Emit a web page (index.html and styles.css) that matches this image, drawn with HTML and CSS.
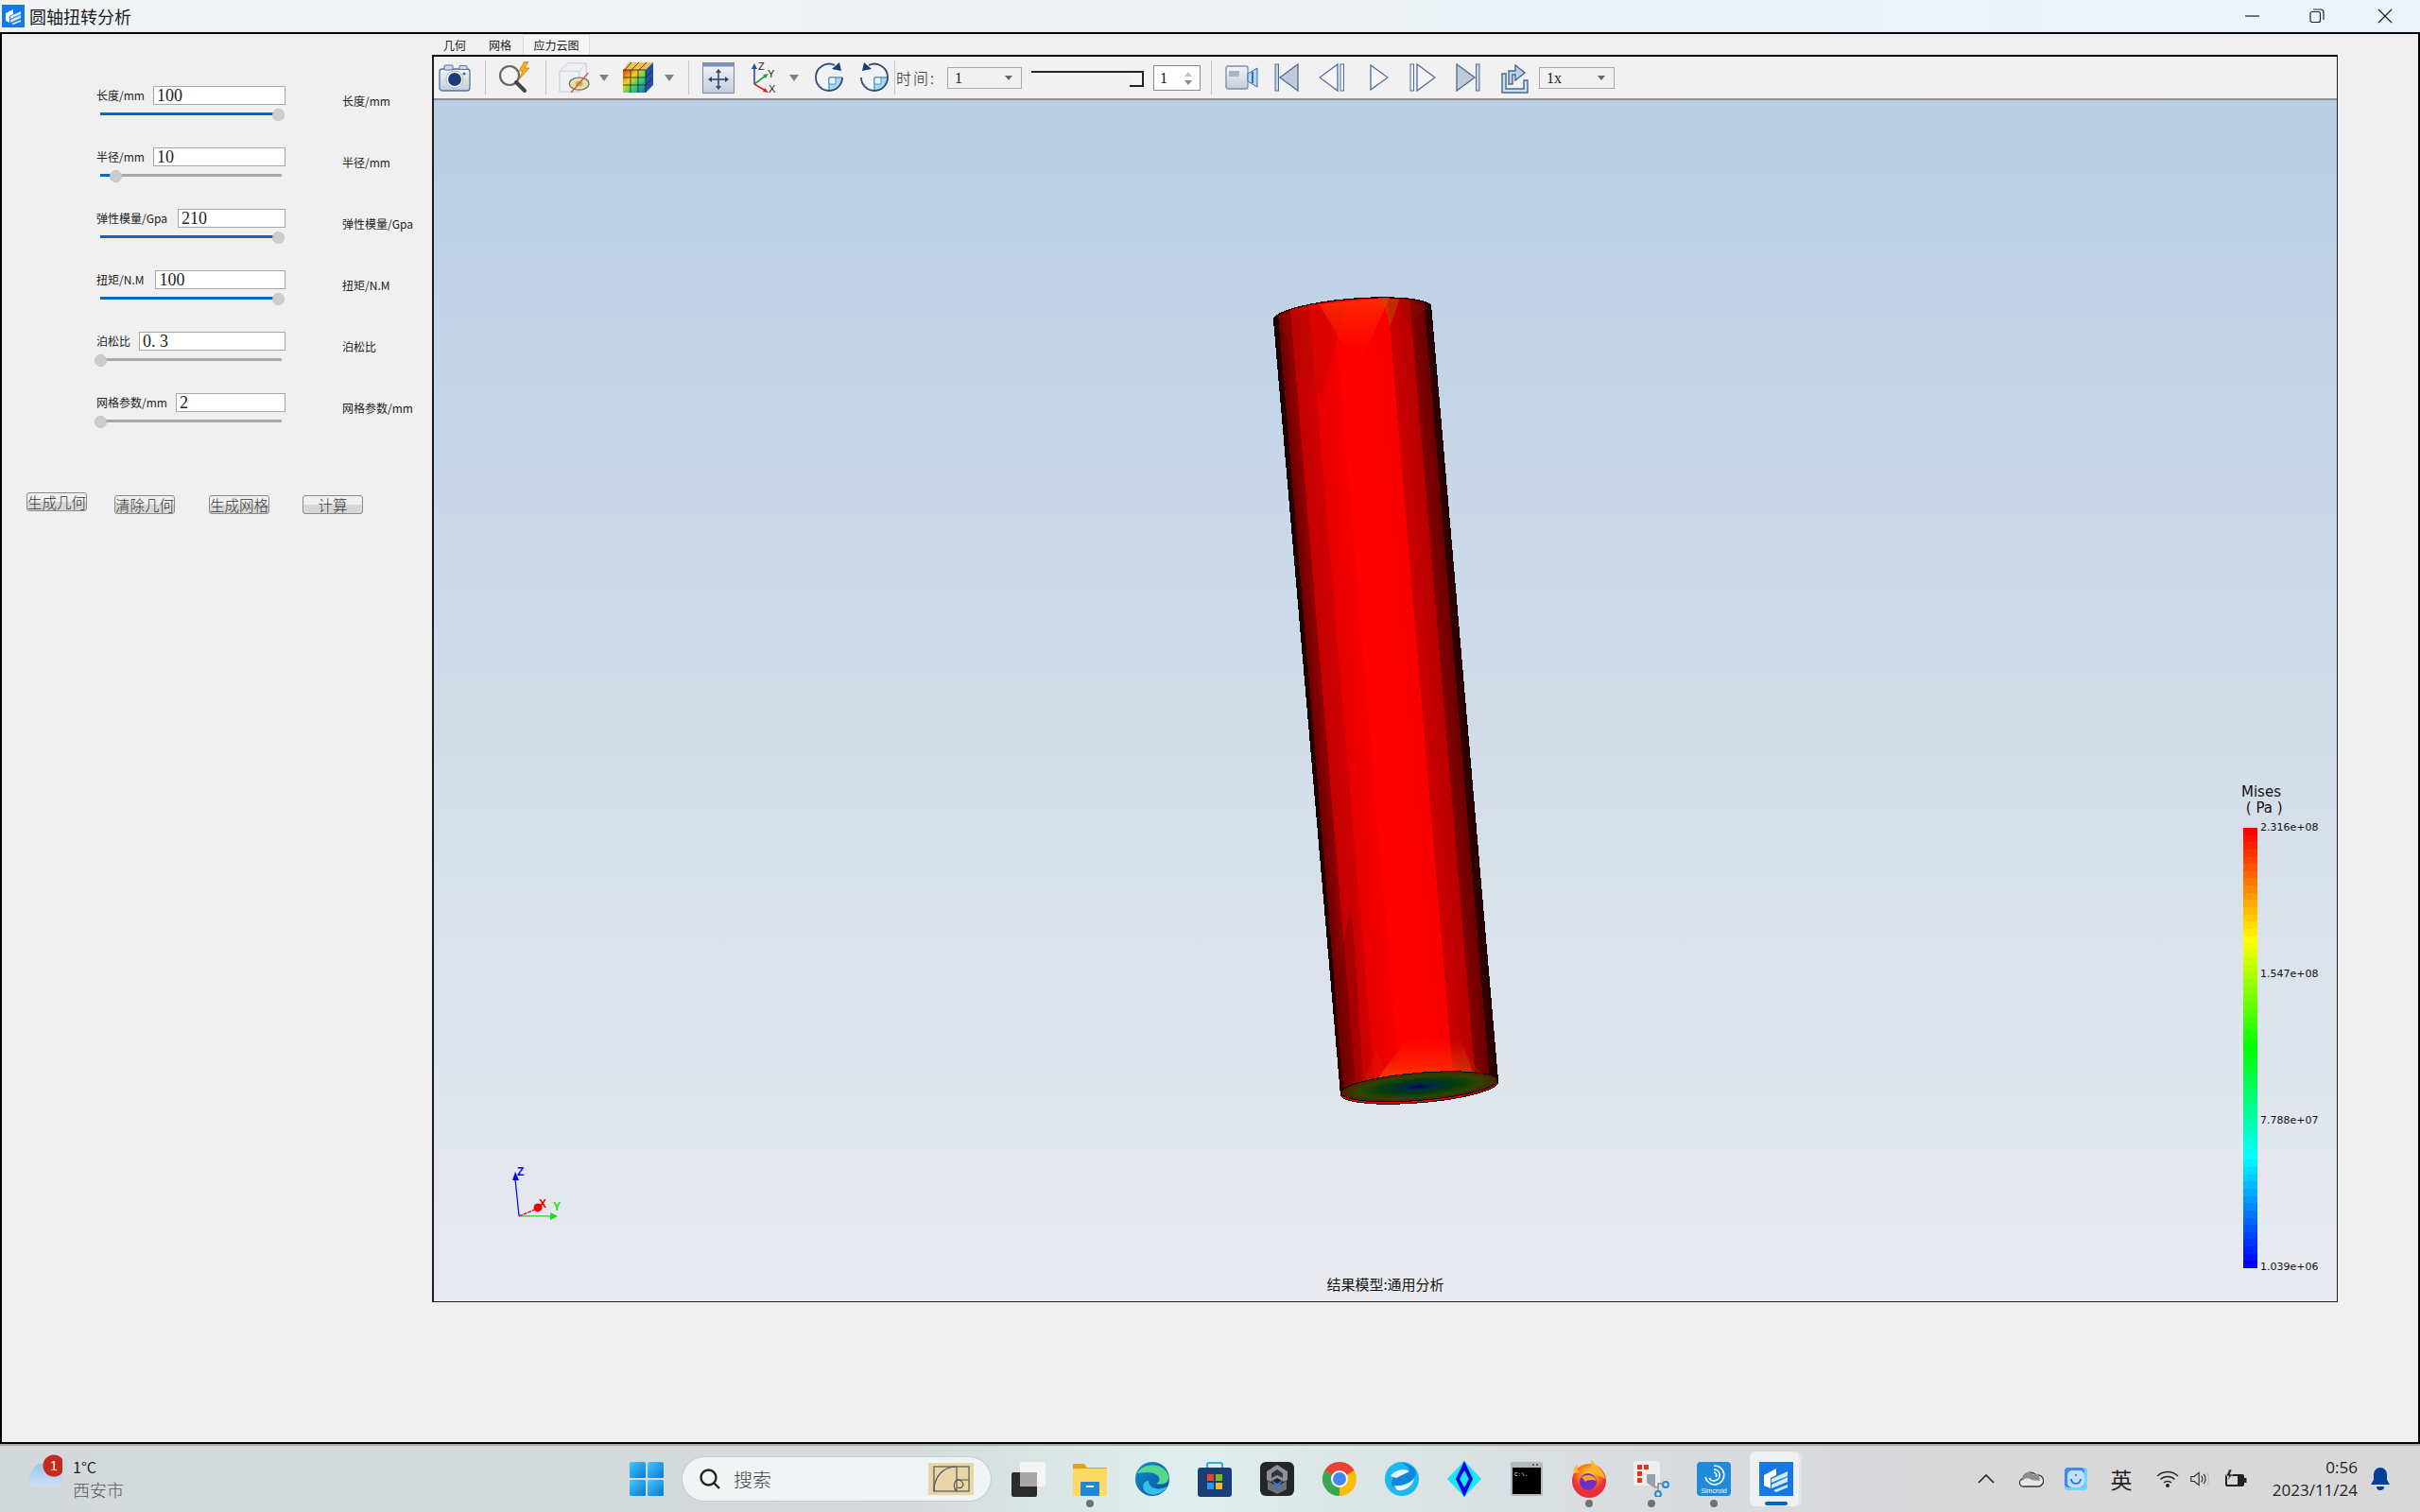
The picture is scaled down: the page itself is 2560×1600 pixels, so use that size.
FILE: index.html
```html
<!DOCTYPE html>
<html lang="zh">
<head>
<meta charset="utf-8">
<title>圆轴扭转分析</title>
<link rel="stylesheet" href="styles.css">
</head>
<body>
<svg class="defs" width="0" height="0">
  <defs>
    <linearGradient id="steel" x1="0" y1="0" x2="0" y2="1"><stop offset="0" stop-color="#f4f6f9"/><stop offset="1" stop-color="#c4ccd9"/></linearGradient>
    <linearGradient id="winblue" x1="0" y1="0" x2="1" y2="1"><stop offset="0" stop-color="#45c8fa"/><stop offset="1" stop-color="#0678d6"/></linearGradient>
    <linearGradient id="rainbow" x1="0" y1="0" x2="1" y2="1"><stop offset="0" stop-color="#e03020"/><stop offset=".35" stop-color="#f0d020"/><stop offset=".65" stop-color="#30d070"/><stop offset="1" stop-color="#2060d0"/></linearGradient>
  </defs>
</svg>
<div class="screen">
  <header class="titlebar">
    <svg class="app-icon" viewBox="0 0 24 24" width="24" height="24"><rect width="24" height="24" fill="#1677e6"/><path d="M4 9 12 5v5l-4 2v7l-4-2z" fill="#fff"/><path d="M9 12l11-5v3L9 15zM9 16l11-5v3L9 19zM10 20l10-4v2l-8 3z" fill="#d6e8fb"/></svg>
    <span class="title-text">圆轴扭转分析</span>
    <div class="win-controls">
      <span class="win-btn"><svg width="16" height="16" viewBox="0 0 16 16"><path d="M0 8h15" stroke="#222" stroke-width="1.2"/></svg></span>
      <span class="win-btn"><svg width="16" height="16" viewBox="0 0 16 16" fill="none" stroke="#222" stroke-width="1.2"><rect x="1" y="3.5" width="10.5" height="11" rx="2"/><path d="M4 1h8a3 3 0 0 1 3 3v8"/></svg></span>
      <span class="win-btn win-close"><svg width="16" height="16" viewBox="0 0 16 16"><path d="M1 1l14 14M15 1L1 15" stroke="#222" stroke-width="1.2"/></svg></span>
    </div>
  </header>

  <main class="window">
    <section class="panel">
      <div class="params">
        <div class="param">
          <div class="param-line"><label class="plabel">长度/mm</label><div class="pinput">100</div></div>
          <div class="slider"><div class="slider-fill" style="width:98.4%"></div></div>
        </div>
        <span class="plabel mirror">长度/mm</span>
        <div class="param">
          <div class="param-line"><label class="plabel">半径/mm</label><div class="pinput">10</div></div>
          <div class="slider"><div class="slider-fill" style="width:8.9%"></div></div>
        </div>
        <span class="plabel mirror">半径/mm</span>
        <div class="param">
          <div class="param-line line-wide"><label class="plabel">弹性模量/Gpa</label><div class="pinput">210</div></div>
          <div class="slider"><div class="slider-fill" style="width:98.4%"></div></div>
        </div>
        <span class="plabel mirror">弹性模量/Gpa</span>
        <div class="param">
          <div class="param-line line-wider"><label class="plabel">扭矩/N.M</label><div class="pinput">100</div></div>
          <div class="slider"><div class="slider-fill" style="width:98.4%"></div></div>
        </div>
        <span class="plabel mirror">扭矩/N.M</span>
        <div class="param">
          <div class="param-line"><label class="plabel">泊松比</label><div class="pinput">0. 3</div></div>
          <div class="slider"><div class="slider-fill" style="width:.5%"></div></div>
        </div>
        <span class="plabel mirror">泊松比</span>
        <div class="param">
          <div class="param-line"><label class="plabel">网格参数/mm</label><div class="pinput">2</div></div>
          <div class="slider"><div class="slider-fill" style="width:.5%"></div></div>
        </div>
        <span class="plabel mirror">网格参数/mm</span>
      </div>
      <div class="actions">
        <button class="act act-raised">生成几何</button>
        <button class="act">清除几何</button>
        <button class="act">生成网格</button>
        <button class="act">计算</button>
      </div>
    </section>

    <section class="workspace">
      <nav class="tabs">
        <span class="tab">几何</span>
        <span class="tab">网格</span>
        <span class="tab tab-active">应力云图</span>
      </nav>
      <div class="frame">
        <div class="toolbar">
          <span class="cell"><svg width="34" height="30" viewBox="0 0 34 30"><rect x="1" y="6" width="32" height="23" rx="3" fill="url(#steel)" stroke="#55739c" stroke-width="1.3"/><rect x="6" y="2" width="9" height="5" rx="1" fill="#d5dce6" stroke="#55739c"/><rect x="22" y="2.5" width="8" height="4" rx="1" fill="#d5dce6" stroke="#55739c"/><circle cx="17" cy="17" r="9" fill="#fff" stroke="#a9b6c9"/><circle cx="17" cy="17" r="7" fill="#1c3d78"/><circle cx="27" cy="11" r="1.5" fill="#4a6a95"/></svg></span>
          <span class="cell"><i class="tsep"></i></span>
          <span class="cell"><svg width="36" height="34" viewBox="0 0 36 34"><circle cx="13" cy="15" r="10" fill="#f4f4f4" stroke="#666" stroke-width="2.2"/><path d="M20 22l9 9" stroke="#444" stroke-width="4" stroke-linecap="round"/><path d="M29 0l-6 10h4l-4 9 11-12h-5l4-7z" fill="#f0b020" stroke="#d07818" stroke-width=".8"/></svg></span>
          <span class="cell"><i class="tsep"></i></span>
          <span class="cell"><svg width="36" height="34" viewBox="0 0 36 34"><path d="M2 10l9-9h21v24l-8 8H2z" fill="#eef0f3" stroke="#c3c8d0"/><path d="M2 10h22v23M24 10l8-9" fill="none" stroke="#c9ced6"/><ellipse cx="24" cy="24" rx="11" ry="7" fill="#e7dcae" stroke="#666" stroke-width="1.2"/><ellipse cx="24" cy="24" rx="4" ry="3" fill="#caa860"/><path d="M15 34L34 12" stroke="#d8552c" stroke-width="1.4"/></svg></span>
          <span class="cell"><i class="tri"></i></span>
          <span class="cell"><svg width="34" height="34" viewBox="0 0 34 34"><path d="M7 1h26L25 9H1z" fill="#f0c050"/><path d="M25 9l8-8v24l-8 8z" fill="#2050a8"/><rect x="1" y="9" width="24" height="24" fill="url(#rainbow)"/><path d="M1 17h24M1 25h24M9 9v24M17 9v24M10 1 3 9M18 1l-8 8M26 1l-8 8M1 9h24M25 9v24M25 17l8-8M25 25l8-8" stroke="#222" stroke-width=".8" fill="none"/></svg></span>
          <span class="cell"><i class="tri"></i></span>
          <span class="cell"><i class="tsep"></i></span>
          <span class="cell"><svg width="34" height="33" viewBox="0 0 34 33"><rect x=".5" y=".5" width="33" height="32" fill="url(#steel)" stroke="#7a8aa4"/><rect x=".5" y=".5" width="33" height="4" fill="#7c92b4"/><path d="M17 9v18M8 18h18" stroke="#2a466e" stroke-width="1.5"/><path d="M17 7l-3 4h6zM17 29l-3-4h6zM6 18l4-3v6zM28 18l-4-3v6z" fill="#2a466e"/></svg></span>
          <span class="cell"><svg width="30" height="34" viewBox="0 0 30 34"><path d="M5 24V6" stroke="#1a4fb0" stroke-width="1.6"/><path d="M5 2l-3 6h6z" fill="#1a4fb0"/><path d="M5 24 17 15" stroke="#20a050" stroke-width="1.6"/><path d="M20 13l-6 1 3 4z" fill="#20a050"/><path d="M5 24l12 7" stroke="#e02020" stroke-width="1.6"/><path d="M20 33l-6-1 2-4z" fill="#e02020"/><text x="9" y="9" class="axis-mini">Z</text><text x="19" y="17" class="axis-mini">Y</text><text x="20" y="33" class="axis-mini">X</text></svg></span>
          <span class="cell"><i class="tri"></i></span>
          <span class="cell"><svg width="32" height="32" viewBox="0 0 32 32"><path d="M16 16h14a14 14 0 0 1-14 14z" fill="#a8d8f4" stroke="#2f6fa8"/><path d="M16 16h7v7h-7z" fill="#e4f3fc" stroke="#2f6fa8" stroke-width=".7"/><path d="M2 16a14 14 0 1 0 28 0M2 16A14 14 0 0 1 22 3" fill="none" stroke="#2c4f78" stroke-width="1.8"/><path d="M29 9l-2-9-8 7z" fill="#1c3d78"/></svg></span>
          <span class="cell"><svg width="32" height="32" viewBox="0 0 32 32"><path d="M16 16h14a14 14 0 0 1-14 14z" fill="#a8d8f4" stroke="#2f6fa8"/><path d="M16 16h7v7h-7z" fill="#e4f3fc" stroke="#2f6fa8" stroke-width=".7"/><path d="M2 16a14 14 0 0 0 28 0 14 14 0 0 0-20-13" fill="none" stroke="#2c4f78" stroke-width="1.8"/><path d="M3 9l2-9 8 7z" fill="#1c3d78"/></svg></span>
          <span class="cell"><i class="tsep"></i></span>
          <span class="time-label">时间:</span>
          <div class="combo"><span>1</span></div>
          <span class="cell cell-end"><div class="time-slider"></div></span>
          <span class="cell cell-end"><div class="spin"><span>1</span><i class="spin-arrows"></i></div></span>
          <span class="cell"><i class="tsep"></i></span>
          <span class="cell"><svg width="35" height="26" viewBox="0 0 35 26"><rect x="1" y="1" width="23" height="24" rx="2" fill="url(#steel)" stroke="#7c8ca6" stroke-width="1.3"/><rect x="4" y="6" width="11" height="6" fill="#a9b4c4"/><path d="M24 9l10-6v20l-10-6z" fill="#b9d4ec" stroke="#3a6fa8"/><path d="M29 7v12" stroke="#2878b8" stroke-width="2"/></svg></span>
          <span class="cell"><svg width="26" height="30" viewBox="0 0 26 30"><rect x="1" y="1" width="3.5" height="28" fill="#c9d3e2" stroke="#4f6c96"/><path d="M25 1v28L6 15z" fill="#c0cad8" stroke="#4f6c96" stroke-width="1.3"/></svg></span>
          <span class="cell"><svg width="28" height="30" viewBox="0 0 28 30"><rect x="23" y="1" width="3.5" height="28" fill="#eef1f5" stroke="#4f6c96"/><path d="M20 1v28L1 15z" fill="#f3f5f8" stroke="#4f6c96" stroke-width="1.3"/></svg></span>
          <span class="cell"><svg width="20" height="28" viewBox="0 0 20 28"><path d="M1 1v26l18-13z" fill="#f3f5f8" stroke="#4f6c96" stroke-width="1.3"/></svg></span>
          <span class="cell"><svg width="28" height="30" viewBox="0 0 28 30"><rect x="1" y="1" width="3.5" height="28" fill="#eef1f5" stroke="#4f6c96"/><path d="M8 1v28l19-14z" fill="#f3f5f8" stroke="#4f6c96" stroke-width="1.3"/></svg></span>
          <span class="cell"><svg width="26" height="30" viewBox="0 0 26 30"><path d="M1 1v28l19-14z" fill="#c0cad8" stroke="#4f6c96" stroke-width="1.3"/><rect x="21.5" y="1" width="3.5" height="28" fill="#c9d3e2" stroke="#4f6c96"/></svg></span>
          <span class="cell"><svg width="30" height="34" viewBox="0 0 30 34"><path d="M2 13h4v16h19v-9h4v13H2z" fill="#cfdcec" stroke="#47698f" stroke-width="1.4"/><path d="M9 24V10h7V4l10 8-10 8v-6h-3v10z" fill="#bcd2ea" stroke="#47698f" stroke-width="1.4"/></svg></span>
          <span class="cell cell-end"><div class="combo combo-speed"><span>1x</span></div></span>
        </div>
        <div class="viewport">
          <svg class="scene" viewBox="459 106 2012 1270" preserveAspectRatio="none">
            <defs>
              <linearGradient id="shaft" gradientUnits="userSpaceOnUse" x1="1347" y1="337" x2="1513" y2="323">
                <stop offset="0" stop-color="#200000"/><stop offset=".03" stop-color="#200000"/>
                <stop offset=".03" stop-color="#6d0000"/><stop offset=".11" stop-color="#960000"/>
                <stop offset=".11" stop-color="#c40000"/><stop offset=".23" stop-color="#d20000"/>
                <stop offset=".23" stop-color="#e60000"/><stop offset=".39" stop-color="#f60000"/>
                <stop offset=".39" stop-color="#ff0000"/><stop offset=".73" stop-color="#f80000"/>
                <stop offset=".73" stop-color="#cc0000"/><stop offset=".87" stop-color="#b80000"/>
                <stop offset=".87" stop-color="#850000"/><stop offset=".96" stop-color="#6a0000"/>
                <stop offset=".96" stop-color="#2c0000"/><stop offset="1" stop-color="#2c0000"/>
              </linearGradient>
              <radialGradient id="capfill"><stop offset="0" stop-color="#000048"/><stop offset=".18" stop-color="#00294a"/><stop offset=".45" stop-color="#003b10"/><stop offset=".78" stop-color="#304400"/><stop offset="1" stop-color="#4a2000"/></radialGradient>
              <linearGradient id="topglow" x1="0" y1="0" x2="0" y2="1"><stop offset="0" stop-color="#ff3a00" stop-opacity=".75"/><stop offset="1" stop-color="#ff2000" stop-opacity="0"/></linearGradient>
              <linearGradient id="footglow" x1="0" y1="0" x2="0" y2="1"><stop offset="0" stop-color="#ff3000" stop-opacity="0"/><stop offset="1" stop-color="#ff7000" stop-opacity=".7"/></linearGradient>
              <clipPath id="sideclip"><path d="M1347 337A84 16 -4.7 0 1 1513 323L1584 1144A84 16 -4.7 0 0 1418 1157Z"/></clipPath>
            </defs>
            <g class="crisp">
              <ellipse cx="1501" cy="1150.500" rx="83.500" ry="15.500" transform="rotate(-4.7 1501 1150.500)" fill="#e00000" stroke="#111" stroke-width="1"/>
              <path d="M1347 337A84 16 -4.7 0 1 1513 323L1584 1144A84 16 -4.7 0 0 1418 1157Z" fill="url(#shaft)" stroke="#160000" stroke-width="1.2"/>
              <g clip-path="url(#sideclip)">
                <path d="M1352 335 1425 318 1398 420 1372 395Z" fill="#a01000" opacity=".22"/>
                <path d="M1395 322 1470 314 1440 380 1418 360Z" fill="url(#topglow)"/>
                <path d="M1462 316 1480 316 1470 345Z" fill="#c04800" opacity=".55"/>
                <path d="M1480 316 1510 325 1488 342Z" fill="#8c1000" opacity=".35"/>
                <path d="M1416 1157C1408 1090 1412 1030 1428 960C1436 1020 1436 1080 1442 1145Z" fill="#700000" opacity=".35"/>
                <path d="M1450 1150 1490 1095 1545 1100 1560 1140Z" fill="url(#footglow)"/>
                <path d="M1440 1150 1455 1110 1470 1145Z" fill="#e03000" opacity=".22"/>
                <path d="M1535 1140 1548 1110 1570 1140Z" fill="#b03000" opacity=".28"/>
              </g>
              <ellipse cx="1501" cy="1149" rx="83" ry="14.500" transform="rotate(-4.7 1501 1149)" fill="url(#capfill)" stroke="#0a0a0a" stroke-width="1"/>
            </g>
            <g class="triad">
              <path d="M549 1286 545 1247" stroke="#0000f0" stroke-width="1.2" fill="none"/>
              <path d="M545 1239 542 1248H549Z" fill="#0000f0"/>
              <path d="M549 1286H582" stroke="#10e010" stroke-width="1.2"/>
              <path d="M590 1286 582 1282V1290Z" fill="#10e010"/>
              <path d="M549 1286 566 1279" stroke="#e01010" stroke-width="1.4" stroke-dasharray="4 1"/>
              <circle cx="569" cy="1277" r="4.5" fill="#f00000"/>
              <text x="547" y="1243" class="tz">Z</text>
              <text x="570" y="1277" class="tx">X</text>
              <text x="585" y="1280" class="ty">Y</text>
            </g>
          </svg>
          <div class="legend">
            <div class="legend-title">Mises<br>&nbsp;( Pa )</div>
            <div class="legend-body">
              <div class="legend-bar"></div>
              <div class="legend-vals"><span>2.316e+08</span><span>1.547e+08</span><span>7.788e+07</span><span>1.039e+06</span></div>
            </div>
          </div>
          <div class="result-type">结果模型:通用分析</div>
        </div>
      </div>
    </section>
  </main>

  <footer class="taskbar">
    <div class="weather">
      <svg class="cloud" width="38" height="36" viewBox="0 0 38 36"><defs><linearGradient id="cl" x1="0" y1="0" x2="0" y2="1"><stop offset="0" stop-color="#9cc4ee"/><stop offset="1" stop-color="#cfe0f6"/></linearGradient></defs><path d="M8 34a8 8 0 0 1-2-15A11 11 0 0 1 27 16a9 9 0 0 1 3 18z" fill="url(#cl)"/><circle class="badge-bg" cx="29" cy="12" r="11.500" fill="#c42b1c"/><text x="29" y="17" class="badge-num">1</text></svg>
      <div class="weather-text"><span class="temp">1°C</span><span class="city">西安市</span></div>
    </div>
    <div class="task-center">
      <span class="tb"><svg width="36" height="36" viewBox="0 0 36 36"><rect width="17" height="17" rx="1.5" fill="url(#winblue)"/><rect x="19" width="17" height="17" rx="1.5" fill="url(#winblue)"/><rect y="19" width="17" height="17" rx="1.5" fill="url(#winblue)"/><rect x="19" y="19" width="17" height="17" rx="1.5" fill="url(#winblue)"/></svg></span>
      <div class="search">
        <svg width="24" height="24" viewBox="0 0 24 24" fill="none" stroke="#222" stroke-width="2.4"><circle cx="10.5" cy="10.5" r="8"/><path d="M16 16l6 6"/></svg>
        <span class="search-text">搜索</span>
        <svg class="search-art" width="48" height="34" viewBox="0 0 48 34"><rect width="48" height="34" fill="#e8d6a8"/><g fill="none" stroke="#555" stroke-width="1.2"><rect x="6" y="4" width="37" height="26"/><path d="M6 30C6 14 16 4 30 4M30 4v26M30 18h13"/><path d="M30 30a8 8 0 0 1 0-12 6 6 0 0 1 7 5 4 4 0 0 1-6 3"/></g></svg>
      </div>
      <span class="tb tb-task"><svg width="36" height="38" viewBox="0 0 36 38"><rect x="9" y="1" width="27" height="26" rx="2" fill="#f5f5f5"/><rect y="12" width="27" height="26" rx="2" fill="#2b2b2b"/><rect x="9" y="12" width="18" height="15" fill="#a8a8a8"/></svg></span>
      <span class="tb tb-running"><svg width="36" height="36" viewBox="0 0 36 36"><path d="M0 2h12l3 4h21v30H0z" fill="#e0a020"/><rect y="7" width="36" height="29" fill="#ffd966"/><rect x="8" y="21" width="20" height="15" rx="1" fill="#1e88d8"/><rect x="14" y="25" width="8" height="2" fill="#fff"/></svg></span>
      <span class="tb"><svg width="36" height="36" viewBox="0 0 36 36"><defs><linearGradient id="ed" x1="0" y1="0" x2="1" y2="1"><stop offset="0" stop-color="#0f8fd0"/><stop offset="1" stop-color="#0a4f9e"/></linearGradient></defs><circle cx="18" cy="18" r="18" fill="url(#ed)"/><path d="M2 12C6 2 28-2 35 14c2 8-6 11-13 9 4-2 5-6 1-9C15 9 6 12 2 12z" fill="#54d88c"/><path d="M14 20c0 8 10 11 20 6-4 7-15 12-23 6-5-4-3-12 3-12z" fill="#35c0e8"/></svg></span>
      <span class="tb"><svg width="36" height="38" viewBox="0 0 36 38"><path d="M10 10V4a2 2 0 0 1 2-2h12a2 2 0 0 1 2 2v6" fill="none" stroke="#35a8e8" stroke-width="2"/><rect y="7" width="36" height="31" rx="3" fill="#1a3f78"/><rect x="10" y="14" width="7" height="7" fill="#e8452a"/><rect x="19" y="14" width="7" height="7" fill="#7cb82a"/><rect x="10" y="23" width="7" height="7" fill="#2a9ae8"/><rect x="19" y="23" width="7" height="7" fill="#f8b818"/></svg></span>
      <span class="tb"><svg width="36" height="36" viewBox="0 0 36 36"><rect width="36" height="36" rx="6" fill="#252627"/><path d="M18 3l11 7v9l-4 2-7-4-7 4-4-2v-9z" fill="#8d9096"/><path d="M18 8l6 4v5l-6-3-6 3v-5z" fill="#33353a"/><path d="M8 20l10 6 10-6v9l-10 5-10-5z" fill="#6d7077"/><path d="M12 19l6 4 6-4-6 10z" fill="#3c78c8"/></svg></span>
      <span class="tb"><svg width="36" height="36" viewBox="0 0 36 36"><circle cx="18" cy="18" r="18" fill="#fbbc05"/><path d="M18 18 2.4 9A18 18 0 0 1 33.6 9Z" fill="#ea4335"/><path d="M18 18 18 36A18 18 0 0 1 2.4 9Z" fill="#34a853"/><circle cx="18" cy="18" r="9" fill="#fff"/><circle cx="18" cy="18" r="7" fill="#4285f4"/></svg></span>
      <span class="tb"><svg width="36" height="36" viewBox="0 0 36 36"><circle cx="18" cy="18" r="18" fill="#1eb8f0"/><path d="M7 25C18 30 28 22 33 13 33 7 26 1 18 1 26 5 27 9 24 11 16 10 6 14 7 25z" fill="#0d86dc"/><path d="M6 15C10 9 20 6 26 10L12 17zM10 25c8 1 15-2 21-7-2 8-10 13-18 12z" fill="#fff" opacity=".9"/></svg></span>
      <span class="tb"><svg width="36" height="38" viewBox="0 0 36 38"><path d="M18 0 36 19 18 38 0 19Z" fill="#18e8f0"/><path d="M18 0 27 19 18 38 9 19Z" fill="#0000e8"/><path d="M18 10 23 19 18 28 13 19Z" fill="#18e8f0"/></svg></span>
      <span class="tb"><svg width="34" height="36" viewBox="0 0 34 36"><rect width="34" height="36" rx="2" fill="#b4b8c0"/><rect x="2" y="6" width="30" height="28" fill="#000"/><text x="4" y="15" class="cmd-text">C:\.</text><circle cx="24" cy="3" r="1" fill="#444"/><circle cx="28" cy="3" r="1" fill="#444"/></svg></span>
      <span class="tb tb-running"><svg width="36" height="40" viewBox="0 0 36 40"><defs><radialGradient id="ff" cx=".5" cy=".3"><stop offset="0" stop-color="#ffd23a"/><stop offset=".6" stop-color="#ff7a1a"/><stop offset="1" stop-color="#e8303c"/></radialGradient></defs><circle cx="18" cy="22" r="18" fill="url(#ff)"/><path d="M20 0c8 8 14 12 15 20L20 12z" fill="#ffb42a"/><circle cx="17" cy="23" r="9" fill="#6a2fc8"/><path d="M10 18c6-4 14-2 16 4-5-2-10-1-12 1z" fill="#ff9d2e"/><path d="M2 14C1 8 4 6 6 5c-1 4 1 7 3 8z" fill="#ffb42a"/></svg></span>
      <span class="tb tb-running"><svg width="38" height="38" viewBox="0 0 38 38"><rect width="28" height="26" rx="3" fill="#eceef0"/><rect x="4" y="4" width="5" height="5" fill="#d83b1c"/><rect x="11" y="4" width="5" height="5" fill="#d83b1c"/><rect x="4" y="11" width="5" height="5" fill="#d83b1c"/><rect x="4" y="18" width="5" height="5" fill="#d83b1c"/><path d="M14 14h9v12l3 2-3 1-9-6z" fill="#98a0a8"/><circle cx="34" cy="25" r="3" fill="none" stroke="#1e88d8" stroke-width="2"/><circle cx="26" cy="35" r="3" fill="none" stroke="#1e88d8" stroke-width="2"/><path d="M26 32v-8l6 0" stroke="#888" stroke-width="1.5" fill="none"/></svg></span>
      <span class="tb tb-running"><svg width="36" height="36" viewBox="0 0 36 36"><rect width="36" height="36" rx="4" fill="#1f8ad8"/><path d="M18 4a10 10 0 1 1-9 12M18 8a6 6 0 1 1-5 9M18 11a3 3 0 0 1 2 5" fill="none" stroke="#fff" stroke-width="1.6"/><text x="18" y="33" class="sim-text">Simcroid</text></svg></span>
      <span class="tb tb-active"><svg width="36" height="36" viewBox="0 0 36 36"><rect width="36" height="36" fill="#1677e6"/><path d="M5 14 18 7v7l-6 3v11l-7-3z" fill="#fff"/><path d="M13 18l17-8v5L13 22zM13 24l17-8v5L13 28zM15 30l15-6v3l-12 5z" fill="#d6e8fb"/></svg></span>
    </div>
    <div class="tray">
      <span class="tcell"><svg width="18" height="10" viewBox="0 0 18 10"><path d="M1 9l8-8 8 8" fill="none" stroke="#222" stroke-width="1.6"/></svg></span>
      <span class="tcell"><svg width="26" height="18" viewBox="0 0 26 18"><path d="M5 17a4 4 0 0 1-1-8A8 8 0 0 1 18 5a6 6 0 0 1 3 12z" fill="#e8e8e8" stroke="#333" stroke-width="1.3"/><path d="M3 11c3-4 8-3 10-1l9 1-1-6c-2-2-5-1-6 0-3-5-9-3-11 2z" fill="#8e8e8e"/></svg></span>
      <span class="tcell"><svg width="24" height="24" viewBox="0 0 24 24"><rect width="24" height="24" rx="4" fill="#6cd4f8"/><rect x="0" y="0" width="21" height="21" rx="4" fill="#3e88f0"/><rect x="3" y="3" width="18" height="18" rx="5" fill="#bfe0ff"/><path d="M7 12a5 5 0 0 0 10 0" fill="none" stroke="#2866e0" stroke-width="1.7"/><circle cx="12" cy="8" r="1" fill="#2866e0"/></svg></span>
      <span class="tcell ime">英</span>
      <span class="tcell"><svg width="24" height="18" viewBox="0 0 24 18" fill="none" stroke="#222" stroke-width="1.4"><path d="M1 6c6-6 16-6 22 0M4.500 9.500c4-4 11-4 15 0M8 13c2-2 6-2 8 0"/><circle cx="12" cy="16" r="1.300" fill="#222"/></svg></span>
      <span class="tcell"><svg width="24" height="20" viewBox="0 0 24 20" fill="none" stroke="#222" stroke-width="1.3"><path d="M1 7v6h4l6 5V2L5 7z"/><path d="M14 6c2 2 2 6 0 8M17 4c3 3 3 9 0 12"/><path d="M21 2c3.500 4 3.500 12 0 16" stroke="#bbb"/></svg></span>
      <span class="tcell"><svg width="24" height="20" viewBox="0 0 24 20"><rect x="1" y="5" width="20" height="13" rx="2" fill="#222"/><rect x="21" y="9" width="2.500" height="5" fill="#222"/><rect x="3" y="7" width="11" height="9" fill="#d8d8d8"/><path d="M5 0 2 7h3l-2 5 6-7H6l2-5z" fill="#222" stroke="#d8d8d8" stroke-width=".6"/></svg></span>
      <div class="clock"><span>0:56</span><span>2023/11/24</span></div>
      <span class="tcell"><svg width="20" height="24" viewBox="0 0 20 24"><path d="M10 0a7 7 0 0 1 7 7v6l3 5H0l3-5V7a7 7 0 0 1 7-7z" fill="#003e98"/><path d="M6 20h8a4 4 0 0 1-8 0z" fill="#003e98"/></svg></span>
    </div>
  </footer>
</div>
</body>
</html>
```

FILE: styles.css
```css
* { box-sizing: border-box; }
html, body { margin: 0; padding: 0; }
body { font-family: "Noto Sans CJK SC", "Noto Sans", sans-serif; color: #111; }
.defs { position: absolute; }
.screen { width: 2560px; height: 1600px; display: flex; flex-direction: column; overflow: hidden; background: #f0f0f0; }

/* title bar */
.titlebar { height: 34px; flex: none; display: flex; align-items: center; padding-left: 2px; background: linear-gradient(90deg, #eff3f5, #edf2f6 60%, #ecf3fa); }
.app-icon { flex: none; }
.title-text { margin-left: 5px; font-size: 18px; line-height: 24px; color: #1a1a1a; }
.win-controls { margin-left: auto; display: grid; grid-template-columns: 68px 68px 75px; }
.win-btn { display: flex; align-items: center; justify-content: center; height: 32px; }

/* application window */
.window { flex: 1; display: flex; align-items: flex-start; border: 2px solid #000; background: #f0f0f0; min-height: 0; }
.panel { width: 455px; flex: none; }
.params { display: grid; grid-template-columns: 200px auto; column-gap: 60px; row-gap: 34px; padding: 55px 0 0 100px; justify-content: start; }
.param { display: flex; flex-direction: column; }
.param-line { display: flex; align-items: center; gap: 9px; height: 20px; }
.line-wide { gap: 11px; }
.line-wider { gap: 12px; }
.plabel { font-size: 12px; line-height: 16px; white-space: nowrap; color: #222; }
.mirror { margin-top: 8px; }
.pinput { flex: 1; height: 20px; padding-left: 3px; background: #fff; border: 1px solid #a8a8a8; font: 18px/19px "Liberation Serif", serif; color: #222; }
.slider { position: relative; height: 3px; margin: 8px 4px 0; background: #a9a9a9; }
.slider-fill { position: relative; height: 3px; background: #0f67bf; }
.slider-fill::after { content: ""; position: absolute; right: -6px; top: -4px; width: 11px; height: 11px; border-radius: 50%; background: #cdcdcd; border: 1px dotted #b4b4b4; }

.actions { display: grid; grid-template-columns: 93px 100px 99px 64px; padding: 77px 0 0 26px; align-items: start; }
.act { width: 64px; height: 20px; padding: 0; white-space: nowrap; display: flex; justify-content: center; align-items: center; border: 1px solid #8a8a8a; border-radius: 3px; background: linear-gradient(180deg, #f0f0f0 0 50%, #d6d6d6 50%); font: 300 15.5px/18px "Noto Sans CJK SC", sans-serif; color: #333; }
.act-raised { margin-top: -3px; }

/* workspace */
.workspace { width: 2016px; flex: none; }
.tabs { display: grid; grid-template-columns: 48px 48px 71px; height: 22px; }
.tab { display: flex; align-items: center; justify-content: center; font-size: 12px; color: #222; }
.tab-active { background: #f5f5f5; border: 1px solid #dcdcdc; border-bottom: 0; }
.frame { height: 1320px; display: flex; flex-direction: column; border: 1px solid #1c1c1c; border-top: 2px solid #111; border-left-width: 2px; }
.toolbar { height: 46px; flex: none; display: grid; grid-template-columns: 44px 21px 40px 26px 34px 30px 42px 24px 16px 48px 48px 16px 58px 38px 4px 54px 79px 129px 60px 22px 42px 54px 42px 58px 34px 62px 36px 88px; align-items: center; background: #f1f1f1; border-bottom: 2px solid #8f8f8f; }
.cell { display: flex; align-items: center; justify-content: center; height: 44px; }
.cell-end { justify-content: flex-end; }
.tsep { display: block; width: 1px; height: 36px; background: #c6c6c6; }
.tri { display: block; width: 0; height: 0; border: 5px solid transparent; border-top: 7px solid #808080; border-bottom: 0; }
.axis-mini { font: 11px "Liberation Sans", sans-serif; fill: #222; }
.time-label { font: 300 16px/20px "Noto Sans CJK SC", sans-serif; letter-spacing: 2px; color: #222; white-space: nowrap; }
.combo { position: relative; width: 79px; height: 23px; padding-left: 7px; border: 1px solid #a9a9a9; font: 16px/21px "Liberation Serif", serif; color: #222; }
.combo::after { content: ""; position: absolute; right: 9px; top: 8px; border: 4px solid transparent; border-top: 5px solid #666; border-bottom: 0; }
.combo-speed { width: 80px; }
.time-slider { position: relative; width: 119px; height: 15px; border-top: 2px solid #222; }
.time-slider::after { content: ""; position: absolute; right: 0; top: 0; width: 13px; height: 13px; background: #f4f4f4; border-right: 2px solid #222; border-bottom: 2px solid #222; }
.spin { position: relative; width: 50px; height: 27px; padding-left: 6px; background: #fff; border: 1px solid #8a8a8a; font: 16px/25px "Liberation Serif", serif; }
.spin-arrows { position: absolute; right: 8px; top: 6px; width: 8px; height: 14px; }
.spin-arrows::before { content: ""; position: absolute; left: 0; top: 0; border: 4px solid transparent; border-top: 0; border-bottom: 5px solid #c4c4c4; }
.spin-arrows::after { content: ""; position: absolute; left: 0; top: 9px; border: 4px solid transparent; border-bottom: 0; border-top: 5px solid #888; }

/* 3D view */
.viewport { position: relative; flex: 1; min-height: 0; background: linear-gradient(180deg, #b9cde4 0%, #c5d5e8 25%, #d3dde9 55%, #dee4ec 78%, #e8eaef 100%); overflow: hidden; }
.scene { position: absolute; left: 0; top: 0; width: 100%; height: 100%; }
.crisp { shape-rendering: crispEdges; }
.triad text { font: bold 12px "Liberation Sans", sans-serif; }
.tz { fill: #0000f0; }
.tx { fill: #f00000; }
.ty { fill: #10e010; }
.legend { position: absolute; left: 1912px; top: 724px; color: #111; }
.legend-title { font: 15px/17px "DejaVu Sans", sans-serif; height: 46px; }
.legend-body { display: flex; padding-left: 2px; gap: 3px; }
.legend-bar { width: 15px; height: 466px; background: linear-gradient(180deg, #f00 7.6px, #f10 0 15.3px, #f20 0 22.9px, #f30 0 30.6px, #f40 0 38.2px, #f50 0 45.8px, #f60 0 53.5px, #f70 0 61.1px, #f80 0 68.8px, #f90 0 76.4px, #fa0 0 84px, #fb0 0 91.7px, #fc0 0 99.3px, #fd0 0 107px, #fe0 0 114.6px, #ff0 0 122.2px, #ef0 0 129.9px, #df0 0 137.5px, #cf0 0 145.2px, #bf0 0 152.8px, #af0 0 160.4px, #9f0 0 168.1px, #8f0 0 175.7px, #7f0 0 183.4px, #6f0 0 191px, #5f0 0 198.6px, #4f0 0 206.3px, #3f0 0 213.9px, #2f0 0 221.6px, #1f0 0 229.2px, #0f0 0 236.8px, #0f1 0 244.5px, #0f2 0 252.1px, #0f3 0 259.8px, #0f4 0 267.4px, #0f5 0 275px, #0f6 0 282.7px, #0f7 0 290.3px, #0f8 0 298px, #0f9 0 305.6px, #0fa 0 313.2px, #0fb 0 320.9px, #0fc 0 328.5px, #0fd 0 336.2px, #0fe 0 343.8px, #0ff 0 351.4px, #0ef 0 359.1px, #0df 0 366.7px, #0cf 0 374.4px, #0bf 0 382px, #0af 0 389.6px, #09f 0 397.3px, #08f 0 404.9px, #07f 0 412.6px, #06f 0 420.2px, #05f 0 427.8px, #04f 0 435.5px, #03f 0 443.1px, #02f 0 450.8px, #01f 0 458.4px, #00f 0 466px); }
.legend-vals { display: flex; flex-direction: column; justify-content: space-between; height: 478px; margin-top: -7px; font: 11px/13px "DejaVu Sans", sans-serif; color: #111; }
.result-type { position: absolute; left: 0; right: 0; bottom: 8px; text-align: center; font-size: 15px; line-height: 20px; color: #111; }

/* taskbar */
.taskbar { height: 72px; flex: none; position: relative; display: flex; align-items: stretch; border-top: 2px solid #a9adae; background: linear-gradient(90deg, #d3d9db 0%, #d5dbdc 38%, #dceaea 46%, #dfeeee 49%, #d9dfe2 62%, #d8d8da 78%, #d8d8d8 100%); }
.weather { width: 651px; flex: none; display: flex; align-items: center; padding-left: 28px; gap: 11px; }
.cloud { margin-bottom: 16px; }
.badge-num { font: 14px "Liberation Sans", sans-serif; fill: #fff; text-anchor: middle; }
.weather-text { display: flex; flex-direction: column; }
.temp { font-size: 16px; line-height: 22px; color: #222; }
.city { font-size: 18px; line-height: 26px; color: #555; font-weight: 300; }
.task-center { display: flex; align-items: center; width: 1426px; flex: none; }
.tb { position: relative; width: 66px; height: 70px; flex: none; display: flex; align-items: center; justify-content: center; }
.tb-task { width: 64px; margin-left: 8px; }
.tb-running::after { content: ""; position: absolute; left: 29px; bottom: 5px; width: 8px; height: 8px; border-radius: 50%; background: #6f7274; }
.tb-active::before { content: ""; position: absolute; left: 5px; top: 6px; width: 52px; height: 58px; border-radius: 6px; background: #eef0f1; box-shadow: 3px 0 0 #e2e3e3; }
.tb-active svg { position: relative; }
.tb-active::after { content: ""; position: absolute; left: 21px; bottom: 7px; width: 24px; height: 4px; border-radius: 2px; background: #0067c0; }
.search { margin-left: 5px; width: 326px; height: 46px; flex: none; display: flex; align-items: center; padding-left: 17px; border-radius: 23px; background: #f1f4f5; box-shadow: 0 0 0 1px #c6cbcd; }
.search-text { margin-left: 13px; font-size: 20px; font-weight: 300; color: #444; }
.search-art { margin-left: auto; margin-right: 18px; }
.tray { display: grid; grid-template-columns: 48px 48px 46px 50px 48px 20px 56px 101px 48px; align-items: center; width: 465px; flex: none; }
.tcell { display: flex; justify-content: center; align-items: center; }
.ime { font-size: 23px; line-height: 30px; color: #222; }
.clock { display: flex; flex-direction: column; align-items: flex-end; font: 17px/24px "Open Sans", sans-serif; color: #222; white-space: nowrap; }
.cmd-text { font: 6px "Liberation Mono", monospace; fill: #fff; }
.sim-text { font: 7px "Liberation Sans", sans-serif; fill: #fff; text-anchor: middle; }
```
